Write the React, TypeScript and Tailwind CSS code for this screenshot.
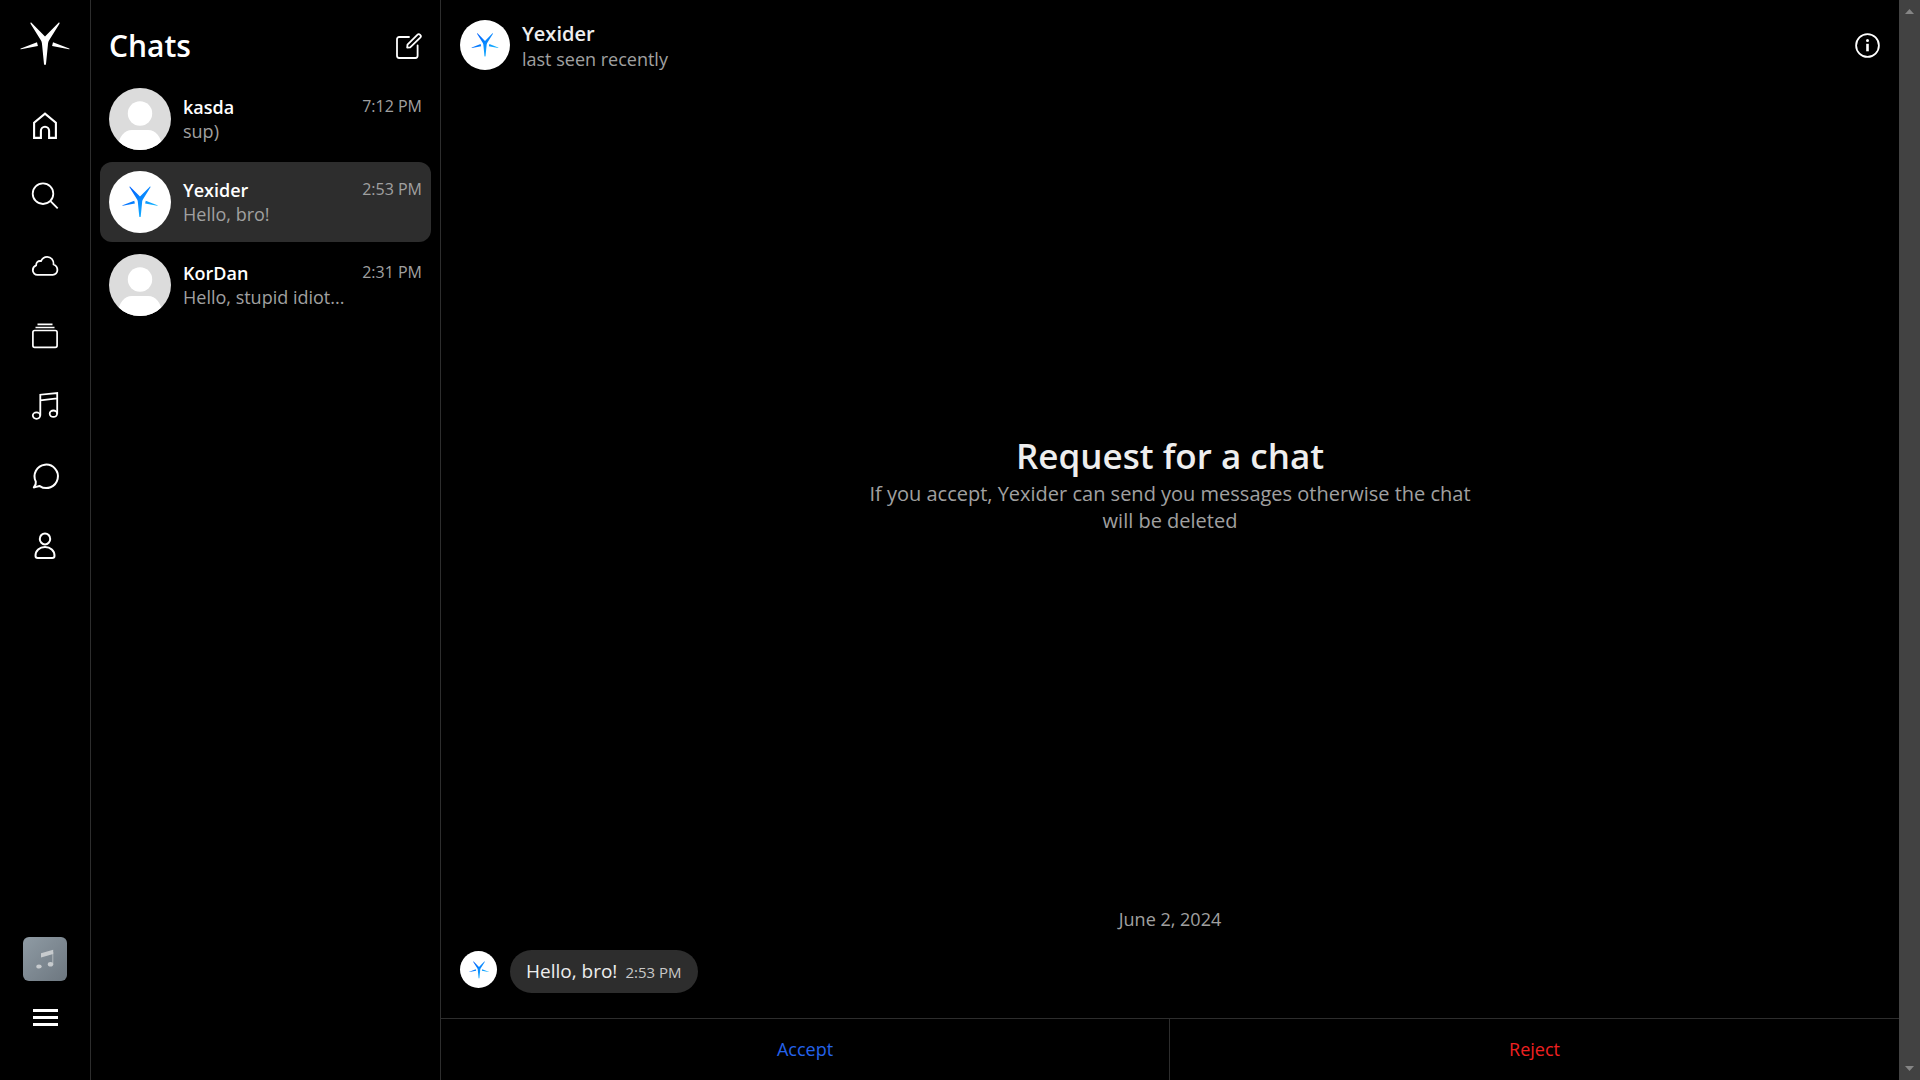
import type { ReactNode } from "react";

const NAV: { label: string; icon: ReactNode }[] = [
  { label: "Home", icon: <path strokeWidth="2.1" d="M2.1 25.900V10.800L13 1.700l10.900 9.100v15.100h-6.800v-7.100a4.100 4.100 0 0 0-8.200 0v7.100z" /> },
  {
    label: "Search",
    icon: (
      <g strokeWidth="1.800">
        <circle cx="11" cy="11.700" r="10.300" />
        <path d="M18.500 19.200l7.200 7.200" />
      </g>
    ),
  },
  {
    label: "Cloud",
    icon: <path strokeWidth="1.800" d="M5.600 22.800h15.200a4.600 4.600 0 0 0 4.600-4.700 6 6 0 0 0-3.800-5.600c.3-4.300-2.600-7.700-6.400-7.700-2.900 0-5 1.600-6.200 4.300-3.100-.5-4.800 1.300-4.900 4.200a5.300 5.300 0 0 0-3.300 4.900 4.600 4.600 0 0 0 4.800 4.600z" />,
  },
  {
    label: "Collections",
    icon: (
      <>
        <rect x=".9" y="8.500" width="24.200" height="16.800" rx="1.800" strokeWidth="1.700" />
        <path strokeWidth="1.700" d="M5.500 2.400h15M3.500 5.500h19" />
      </>
    ),
  },
  {
    label: "Music",
    icon: (
      <g strokeWidth="1.800">
        <ellipse cx="4.500" cy="23.600" rx="3.700" ry="3.200" />
        <ellipse cx="21.400" cy="21.700" rx="3.700" ry="3.200" />
        <path d="M8.300 23.600V2.700L25.200 1v20.700M8.300 8.300l16.900-2" />
      </g>
    ),
  },
  {
    label: "Chats",
    icon: <path strokeWidth="2" strokeLinejoin="round" d="M3.800 19.600A11.700 11.700 0 1 1 7.800 24.100c-1.600-.3-3.600 1.400-6 1.300 1.300-1.500 2.400-3.900 2-5.800z" />,
  },
  {
    label: "Profile",
    icon: (
      <g strokeWidth="2">
        <ellipse cx="13" cy="6.900" rx="5.200" ry="5.500" />
        <path d="M3.500 23.700c0-5.100 4-8.700 9.500-8.700s9.500 3.600 9.500 8.700c0 1.500-.7 2.200-2.300 2.200H5.800c-1.600 0-2.300-.7-2.300-2.200z" />
      </g>
    ),
  },
];

function Star({ className, blue = false }: { className: string; blue?: boolean }) {
  return (
    <svg viewBox="0 0 50 44" className={className} fill={blue ? "url(#star-blue)" : "white"} aria-hidden="true">
      {blue && (
        <defs>
          <linearGradient id="star-blue" x1="0" y1="0" x2="50" y2="44" gradientUnits="userSpaceOnUse">
            <stop offset=".2" stopColor="#0066ff" />
            <stop offset=".9" stopColor="#19c2ff" />
          </linearGradient>
        </defs>
      )}
      <path d="M10.500.7c.3-.3.8-.1 1.200.3L25 14.500 38.300 1c.4-.4.900-.6 1.200-.3.200.3.100.7-.2 1.200L29 18.500c-.8 1.500-1 2.700-1.100 4.500L26 42c-.1 1.300-1.900 1.300-2 0L22.100 23c-.1-1.800-.3-3-1.100-4.500L10.700 1.900c-.3-.5-.4-.9-.2-1.200z" />
      <path d="M17 20.200l.9 3.900L1 27.300C.3 27.400.2 26.700.8 26.400zM33 20.200l-.9 3.900L49 27.300c.7.1.8-.6.2-.9z" />
    </svg>
  );
}

function StarAvatar({ size, mark }: { size: string; mark: string }) {
  return (
    <span className={`flex shrink-0 items-center justify-center rounded-full bg-white ${size}`}>
      <Star blue className={mark} />
    </span>
  );
}

function PersonAvatar() {
  return (
    <svg viewBox="0 0 62 62" className="size-[62px] shrink-0 rounded-full bg-[#dcdcdc]" fill="white" aria-hidden="true">
      <circle cx="31" cy="25.500" r="12.200" />
      <path d="M9 58c1-9 6-16 14-16h16c8 0 13 7 14 16v4H9z" />
    </svg>
  );
}

const CHATS = [
  { name: "kasda", text: "sup)", time: "7:12 PM" },
  { name: "Yexider", text: "Hello, bro!", time: "2:53 PM", star: true, active: true },
  { name: "KorDan", text: "Hello, stupid idiot...", time: "2:31 PM" },
];

function Rail() {
  return (
    <nav aria-label="Main" className="flex w-[91px] shrink-0 flex-col items-center border-r border-[#2d2d2d] pt-[22px] pb-[54px]">
      <a href="#" aria-label="Start">
        <Star className="h-11 w-[50px]" />
      </a>
      <div className="mt-[46px] flex flex-col gap-11">
        {NAV.map((n) => (
          <a key={n.label} href="#" aria-label={n.label}>
            <svg viewBox="0 0 26 26" className="size-[26px] overflow-visible" fill="none" stroke="white" aria-hidden="true">
              {n.icon}
            </svg>
          </a>
        ))}
      </div>
      <button aria-label="Player" className="mt-auto flex size-11 items-center justify-center rounded-md bg-linear-to-br from-[#8f9ba4] to-[#6d7780]">
        <svg viewBox="0 0 18 20" className="h-5 w-[18px]" fill="#c7cbce" aria-hidden="true">
          <ellipse cx="3" cy="17.500" rx="2.700" ry="2.100" />
          <ellipse cx="14.500" cy="15.200" rx="2.700" ry="2.300" />
          <path d="M5 4.200L17.200.8v4.300L5 8.500z" />
          <path d="M16.500 3h.7v12.500h-.7z" />
        </svg>
      </button>
      <button aria-label="Menu" className="mt-7 flex w-[25px] flex-col gap-1">
        <span className="h-[3px] bg-white" />
        <span className="h-[3px] bg-white" />
        <span className="h-[3px] bg-white" />
      </button>
    </nav>
  );
}

function ChatList() {
  return (
    <aside className="flex w-[350px] shrink-0 flex-col border-r border-[#2d2d2d]">
      <header className="flex items-center justify-between pt-[26px] pr-[18px] pl-[18px]">
        <h1 className="text-[30px] leading-10 font-semibold">Chats</h1>
        <button aria-label="New chat">
          <svg viewBox="0 0 26 26" className="size-[26px]" fill="none" stroke="white" strokeWidth="1.800" strokeLinejoin="round" strokeLinecap="round" aria-hidden="true">
            <path d="M13 4H3.200A2.200 2.200 0 0 0 1 6.200v16.600A2.200 2.200 0 0 0 3.200 25h16.200a2.200 2.200 0 0 0 2.200-2.200V12.500" />
            <path d="M11.200 14.700l.3-3L21.300 1.900a2 2 0 0 1 2.900 2.800l-10 9.700z" />
          </svg>
        </button>
      </header>
      <ul className="mt-[13px] flex flex-col gap-[3px] px-[9px]">
        {CHATS.map((c) => (
          <li key={c.name}>
            <button className={`flex h-20 w-full items-center gap-3 rounded-xl px-[9px] text-left text-lg leading-6 ${c.active ? "bg-[#2d2d2d]" : ""}`}>
              {c.star ? <StarAvatar size="size-[62px]" mark="w-9 h-8" /> : <PersonAvatar />}
              <span className="flex min-w-0 flex-1 flex-col">
                <span className="flex justify-between">
                  <span className="font-semibold">{c.name}</span>
                  <span className="text-base leading-[22px] text-[#a0a0a0]">{c.time}</span>
                </span>
                <span className="text-[#a0a0a0]">{c.text}</span>
              </span>
            </button>
          </li>
        ))}
      </ul>
    </aside>
  );
}

function Conversation() {
  return (
    <main className="flex min-w-0 flex-1 flex-col">
      <header className="flex items-center px-[19px] pt-[19px]">
        <StarAvatar size="size-[50px]" mark="w-7 h-6" />
        <div className="ml-3 pt-0.5">
          <h2 className="text-xl leading-[26px] font-semibold text-[#eeeeee]">Yexider</h2>
          <p className="text-lg leading-6 text-[#a0a0a0]">last seen recently</p>
        </div>
        <button aria-label="Chat info" className="ml-auto">
          <svg viewBox="0 0 25 25" className="size-[25px]" fill="none" stroke="white" strokeWidth="1.800" aria-hidden="true">
            <circle cx="12.500" cy="12.500" r="11.400" />
            <circle cx="12.500" cy="7.500" r="1.500" fill="white" stroke="none" />
            <path strokeWidth="2.600" d="M12.500 10.800v7.500" />
          </svg>
        </button>
      </header>

      <section className="flex flex-1 flex-col px-[19px] pb-[25px]">
        <div className="mx-auto flex max-w-[620px] flex-1 flex-col items-center justify-center pb-3 text-center">
          <h3 className="text-[35px] leading-[48px] font-semibold text-[#eeeeee]">Request for a chat</h3>
          <p className="text-xl leading-[27px] text-[#a0a0a0]">If you accept, Yexider can send you messages otherwise the chat will be deleted</p>
        </div>
        <p className="text-center text-lg leading-6 text-[#a0a0a0]">June 2, 2024</p>
        <div className="mt-[19px] flex items-start gap-[13px]">
          <StarAvatar size="size-[37px] mt-px" mark="w-5 h-[18px]" />
          <p className="flex items-baseline gap-2 rounded-full bg-[#2d2d2d] px-4 py-2 text-[19px] leading-[27px] text-[#eeeeee]">
            Hello, bro!
            <time className="text-[15px] leading-5 text-[#c8c8c8]">2:53 PM</time>
          </p>
        </div>
      </section>

      <footer className="grid grid-cols-2 border-t border-[#2d2d2d] text-lg">
        <button className="h-[61px] border-r border-[#2d2d2d] pb-0.5 text-[#2563eb]">Accept</button>
        <button className="h-[61px] pb-0.5 text-[#ef2020]">Reject</button>
      </footer>
    </main>
  );
}

function ScrollTrack() {
  return (
    <div aria-hidden="true" className="flex w-[21px] shrink-0 flex-col items-center justify-between bg-[#424242] py-[9px]">
      <svg viewBox="0 0 9 5" className="h-[5px] w-[9px]" fill="#858585">
        <path d="M4.500 0L9 5H0z" />
      </svg>
      <svg viewBox="0 0 9 5" className="h-[5px] w-[9px]" fill="#858585">
        <path d="M0 0h9L4.500 5z" />
      </svg>
    </div>
  );
}

export default function App() {
  return (
    <div className="flex h-screen overflow-hidden bg-black font-['Open_Sans','Noto_Sans',sans-serif] text-white">
      <Rail />
      <ChatList />
      <Conversation />
      <ScrollTrack />
    </div>
  );
}
